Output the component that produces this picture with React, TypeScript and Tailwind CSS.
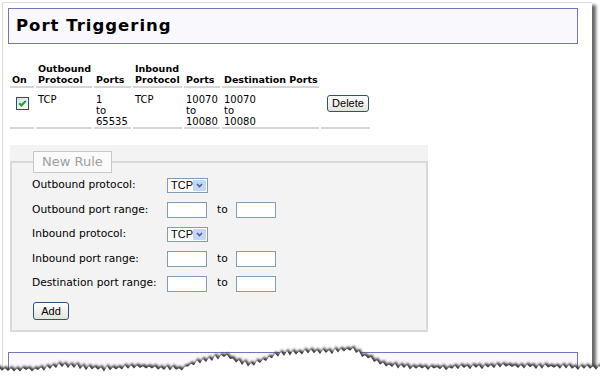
const rows = [
  {
    out: "TCP",
    outPorts: ["1", "to", "65535"],
    inProto: "TCP",
    inPorts: ["10070", "to", "10080"],
    dest: ["10070", "to", "10080"],
  },
];

const headCell =
  "border-b-2 border-[#d6d6d6] px-[2px] pb-[1px] text-left align-bottom text-[9.5px] font-bold leading-[11px]";
const dataCell =
  "border-b-2 border-[#d6d6d6] px-[2px] pt-[4px] pb-0 align-top text-[10px] leading-[11px]";

// torn paper edge along the bottom of the screenshot
const keys: [number, number][] = [
  [0, 367], [40, 366], [60, 362], [100, 366], [140, 364], [180, 366],
  [195, 360], [210, 356], [225, 353], [240, 359], [252, 362], [265, 356],
  [280, 351], [300, 349], [330, 349], [350, 346], [365, 353], [380, 361],
  [400, 364], [450, 365], [500, 363], [560, 364], [600, 365],
];

const base = (x: number) => {
  for (let i = 0; i < keys.length - 1; i++) {
    const [x0, y0] = keys[i];
    const [x1, y1] = keys[i + 1];
    if (x >= x0 && x <= x1) return y0 + ((y1 - y0) * (x - x0)) / (x1 - x0);
  }
  return 365;
};

const tornPath = () => {
  const pts: string[] = [];
  let i = 0;
  for (let x = -4; x <= 604; x += 3) {
    const r = Math.abs(Math.sin(i * 12.9898) * 43758.5453) % 1;
    const y = base(Math.max(0, Math.min(600, x))) + (i % 2 ? -1 : 1) * (0.6 + r * 2);
    pts.push(`${x},${y.toFixed(1)}`);
    i++;
  }
  return `M-4,400 L${pts.join(" L")} L604,400 Z`;
};

const Select = () => (
  <div className="flex h-[15px] w-[41px] items-center border border-[#7f9db9] bg-white">
    <span className="flex-1 pl-[3px] font-['Liberation_Sans',sans-serif] text-[11px] leading-none">
      TCP
    </span>
    <span className="mr-px flex h-[11px] w-[13px] items-center justify-center rounded-[1px] bg-[#c6d6fb]">
      <svg width="7" height="5" viewBox="0 0 7 5">
        <path d="M1 1l2.5 2.5L6 1" stroke="#4d6185" strokeWidth="1.6" fill="none" />
      </svg>
    </span>
  </div>
);

const Range = () => (
  <div className="flex items-center">
    <input className="h-[16px] w-[40px] border border-[#7f9db9] bg-white" />
    <span className="w-[29px] pl-[10px] text-[10.7px]">to</span>
    <input className="h-[16px] w-[40px] border border-[#7f9db9] bg-white" />
  </div>
);

const App = () => {
  const d = tornPath();
  return (
    <main className="relative h-[381px] w-[600px] overflow-hidden bg-white font-['DejaVu_Sans',sans-serif] text-black">
      {/* screenshot frame */}
      <div className="ml-[2px] mt-[2px] h-[400px] w-[590px] border-l border-t border-[#dcdcdc] bg-white pl-[5px] pt-[5px] shadow-[4px_3px_3px_rgba(0,0,0,0.6)]">
        {/* Title */}
        <div className="flex h-[36px] w-[570px] items-center border border-[#7474b8] bg-[#f8f8fd] pl-[7px]">
          <h1 className="text-[16.5px] font-bold tracking-[1px]">Port Triggering</h1>
        </div>

        {/* Rules table */}
        <table className="mt-[17px] w-[364px] table-fixed border-separate border-spacing-[2px]">
          <thead>
            <tr>
              <th className={`${headCell} w-[24px]`}>On</th>
              <th className={`${headCell} w-[56px]`}>Outbound Protocol</th>
              <th className={`${headCell} w-[37px]`}>Ports</th>
              <th className={`${headCell} w-[49px]`}>Inbound Protocol</th>
              <th className={`${headCell} w-[36px]`}>Ports</th>
              <th className={`${headCell} w-[97px] whitespace-nowrap`}>Destination Ports</th>
              <th className="w-[49px]"></th>
            </tr>
          </thead>
          <tbody>
            {rows.map((r, i) => (
              <tr key={i}>
                <td className={dataCell}>
                  <svg width="13" height="13" viewBox="0 0 13 13" className="ml-[4px] mt-[3px]">
                    <defs>
                      <linearGradient id="cb" x1="0" y1="0" x2="1" y2="1">
                        <stop offset="0" stopColor="#dcdcd7" />
                        <stop offset="1" stopColor="#ffffff" />
                      </linearGradient>
                    </defs>
                    <rect x="0.5" y="0.5" width="12" height="12" fill="url(#cb)" stroke="#1c5180" />
                    <path d="M3.2 6.2l2.2 2.3 4.4-4.6" stroke="#21a121" strokeWidth="2" fill="none" />
                  </svg>
                </td>
                <td className={dataCell}>{r.out}</td>
                <td className={dataCell}>
                  {r.outPorts.map((p) => (
                    <div key={p}>{p}</div>
                  ))}
                </td>
                <td className={dataCell}>{r.inProto}</td>
                <td className={dataCell}>
                  {r.inPorts.map((p) => (
                    <div key={p}>{p}</div>
                  ))}
                </td>
                <td className={dataCell}>
                  {r.dest.map((p) => (
                    <div key={p}>{p}</div>
                  ))}
                </td>
                <td className={`${dataCell} px-0`}>
                  <button className="ml-[4px] mt-px h-[17px] w-[42px] rounded-[3px] border border-[#2c4f7c] bg-linear-to-b from-white to-[#e4e4dc] font-['Liberation_Sans',sans-serif] text-[11px] leading-none">
                    Delete
                  </button>
                </td>
              </tr>
            ))}
          </tbody>
        </table>

        {/* New Rule form */}
        <div className="ml-[2px] mt-[14px] w-[418px] bg-[#f3f3f3] pt-[6px]">
          <fieldset className="border-2 border-[#d9d9d9] pb-[10px] pl-[20px] pt-[5px]">
            <legend className="ml-px border border-[#c8c8c8] bg-[#fafafa] px-[8px] text-[13px] leading-[20px] text-[#a0a0a0]">
              New Rule
            </legend>
            <div className="flex flex-col gap-[9.5px] text-[10.7px]">
              <div className="flex h-[15px] items-center">
                <span className="w-[135px]">Outbound protocol:</span>
                <Select />
              </div>
              <div className="flex h-[15px] items-center">
                <span className="w-[135px]">Outbound port range:</span>
                <Range />
              </div>
              <div className="flex h-[15px] items-center">
                <span className="w-[135px]">Inbound protocol:</span>
                <Select />
              </div>
              <div className="flex h-[15px] items-center">
                <span className="w-[135px]">Inbound port range:</span>
                <Range />
              </div>
              <div className="flex h-[15px] items-center">
                <span className="w-[135px]">Destination port range:</span>
                <Range />
              </div>
              <div className="mt-[1.5px]">
                <button className="ml-px h-[18px] w-[36px] rounded-[3px] border border-[#2c4f7c] bg-linear-to-b from-white to-[#e4e4dc] font-['Liberation_Sans',sans-serif] text-[11px] leading-none">
                  Add
                </button>
              </div>
            </div>
          </fieldset>
        </div>

        {/* next panel, cut off */}
        <div className="mt-[20px] h-[40px] w-[570px] border border-[#7474b8] bg-[#f8f8fd]"></div>
      </div>

      {/* torn edge overlay */}
      <svg
        className="pointer-events-none absolute left-0 top-0"
        width="600"
        height="381"
        viewBox="0 0 600 381"
      >
        <defs>
          <filter id="blur" x="-5%" y="-50%" width="110%" height="200%">
            <feGaussianBlur stdDeviation="1.2" />
          </filter>
        </defs>
        <path d={d} fill="#3a3a3a" filter="url(#blur)" transform="translate(1,0.5)" />
        <path d={d} fill="#ffffff" transform="translate(0,3)" />
      </svg>
    </main>
  );
};

export default App;
